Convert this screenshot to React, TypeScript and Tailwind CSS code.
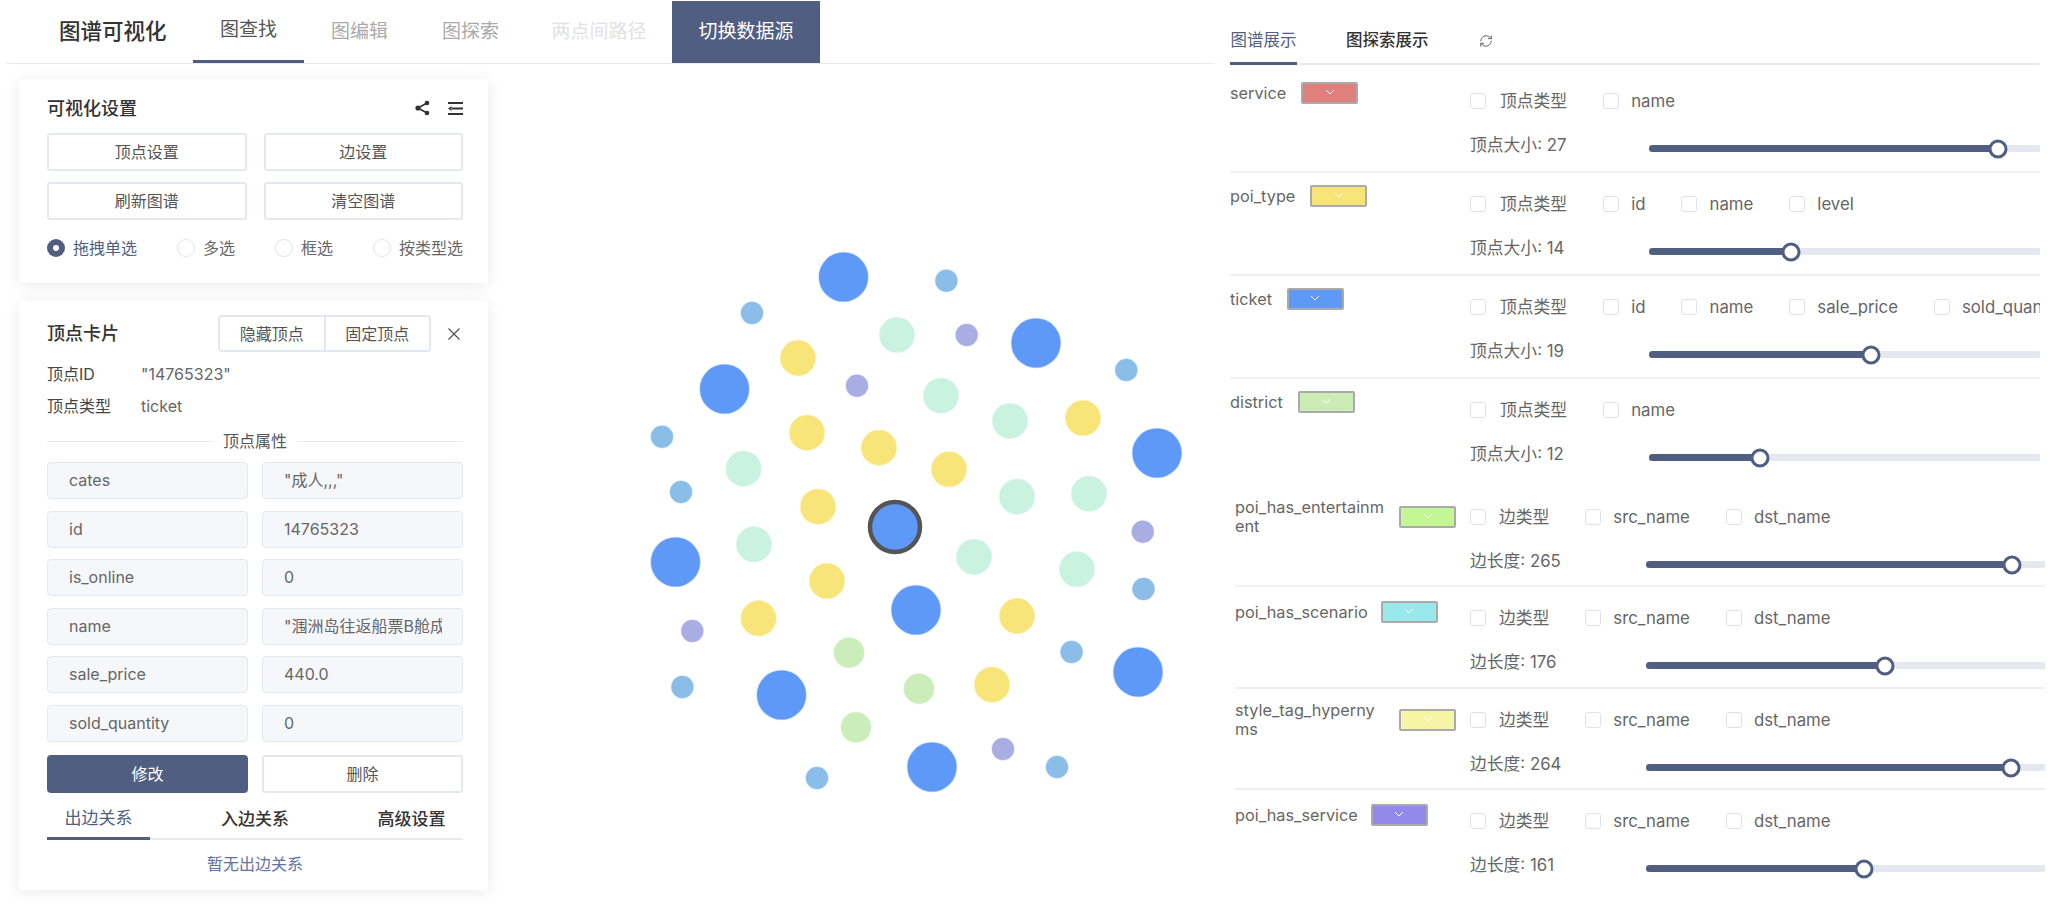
import { RefreshCw } from "lucide-react";

const nodeKinds = [
  {
    r: 25,
    fill: "#5f99f8",
    points: [[843.5, 277], [1036, 343], [724.5, 389], [1157, 453], [675.5, 562], [916, 610], [1138, 672], [781.5, 695], [932, 767]],
  },
  {
    r: 11.5,
    fill: "#8abde7",
    points: [[946.4, 280.7], [752, 313], [1126.3, 370], [662, 436.7], [681, 492], [1143.5, 589], [1071.6, 652], [682.4, 687], [817, 778], [1057, 767]],
  },
  {
    r: 11.5,
    fill: "#a8aee2",
    points: [[966.7, 335], [857, 385.7], [1142.8, 531.7], [692.3, 631], [1003, 749]],
  },
  {
    r: 18,
    fill: "#c9f2e1",
    points: [[897, 335], [941, 395.7], [1010, 421], [743.6, 468.7], [1017, 496.7], [1089, 493.7], [754, 544.3], [974, 557], [1077, 569.3]],
  },
  {
    r: 18,
    fill: "#f8e579",
    points: [[798, 358], [1083, 418], [807, 432.7], [879, 447.7], [949, 469.3], [818, 506.7], [827, 581], [758.5, 618.3], [1017, 616], [992, 684.7]],
  },
  {
    r: 15.5,
    fill: "#cbedba",
    points: [[849, 652.7], [919, 688.7], [856, 727.3]],
  },
];

const attrs = [
  ["cates", '"成人,,,"'],
  ["id", "14765323"],
  ["is_online", "0"],
  ["name", '"涠洲岛往返船票B舱成'],
  ["sale_price", "440.0"],
  ["sold_quantity", "0"],
];

const vertexRows = [
  { label: "service", color: "#e0807c", fields: ["name"], size: "顶点大小: 27", thumb: 349, row: "h-[103px] border-b-2" },
  { label: "poi_type", color: "#f8e579", fields: ["id", "name", "level"], size: "顶点大小: 14", thumb: 142, row: "h-[103px] border-b-2" },
  { label: "ticket", color: "#5f99f8", fields: ["id", "name", "sale_price", "sold_quantity"], size: "顶点大小: 19", thumb: 222, row: "h-[103px] border-b-2" },
  { label: "district", color: "#cbedb5", fields: ["name"], size: "顶点大小: 12", thumb: 111, row: "h-[103px]" },
];

const edgeRows = [
  { label: "poi_has_entertainment", color: "#c2f793", size: "边长度: 265", thumb: 365.5, row: "h-[101px] border-b-2", left: "pt-3" },
  { label: "poi_has_scenario", color: "#99e9eb", size: "边长度: 176", thumb: 238.5, row: "h-[102px] border-b-2", left: "pt-[14px]" },
  { label: "style_tag_hypernyms", color: "#f5f5a5", size: "边长度: 264", thumb: 365, row: "h-[101px] border-b-2", left: "pt-3" },
  { label: "poi_has_service", color: "#9389ea", size: "边长度: 161", thumb: 218, row: "h-[101px]", left: "pt-[14px]" },
];

function Swatch({ color }: { color: string }) {
  return (
    <div
      className="flex h-[22px] w-[57px] shrink-0 items-center justify-center rounded-[2px] border-2 border-[#aaa]"
      style={{ backgroundColor: color }}
    >
      <svg width="10" height="6" viewBox="0 0 10 6" fill="none" className="mb-[3px]">
        <path d="M1 1l4 4 4-4" stroke="white" strokeWidth="1" />
      </svg>
    </div>
  );
}

function Field({ text, gap }: { text: string; gap: string }) {
  return (
    <div className="flex shrink-0 items-center">
      <span className="size-4 shrink-0 rounded-[3px] border border-[#dfe2ea] bg-white" />
      <span className={`${gap} pt-px text-[#666]`}>{text}</span>
    </div>
  );
}

function Slider({ label, thumb, labelWidth }: { label: string; thumb: number; labelWidth: string }) {
  return (
    <div className="flex h-[33px] items-center">
      <span className={`${labelWidth} mb-[6px] shrink-0 text-[#666]`}>{label}</span>
      <div className="relative h-[7px] flex-1 bg-[#e6e8ef]">
        <div className="h-full rounded-l-full bg-[#505e82]" style={{ width: thumb }} />
        <div
          className="absolute top-1/2 size-[19px] -translate-x-1/2 -translate-y-1/2 rounded-full border-[3px] border-[#505e82] bg-white"
          style={{ left: thumb }}
        />
      </div>
    </div>
  );
}

function Radio({ text, checked }: { text: string; checked?: boolean }) {
  return (
    <div className="flex items-center gap-2">
      {checked ? (
        <span className="flex size-[18px] items-center justify-center rounded-full bg-[#505e82]">
          <span className="size-[6px] rounded-full bg-white" />
        </span>
      ) : (
        <span className="size-[18px] rounded-full border border-[#e3e5ec]" />
      )}
      <span className={checked ? "text-[#505e82]" : "text-[#666]"}>{text}</span>
    </div>
  );
}

function OutlineButton({ text }: { text: string }) {
  return (
    <div className="flex h-[38px] items-center justify-center rounded-[3px] border-2 border-[#e6e8ef] bg-white text-[#555]">
      {text}
    </div>
  );
}

function ReadOnlyBox({ text }: { text: string }) {
  return (
    <div className="h-[37px] rounded-[4px] border border-[#e6e8ef] bg-[#f6f7fb] pr-[20px] pl-[21px] leading-[35px] text-[#666]">
      <div className="overflow-hidden whitespace-nowrap">{text}</div>
    </div>
  );
}

export default function App() {
  return (
    <div className="flex h-[910px] w-[2072px] overflow-hidden bg-white font-['Inter','Noto_Sans_CJK_SC',sans-serif] text-base text-[#333]">
      {/* Left: header, panels and graph canvas */}
      <div className="ml-[6px] flex w-[1208px] shrink-0 flex-col">
        <header className="flex h-[64px] shrink-0 items-stretch border-b border-[#e8eaf0] pl-[53px]">
          <div className="mr-[28px] flex w-[106px] items-center whitespace-nowrap text-[21.5px] font-medium text-[#333]">图谱可视化</div>
          <div className="flex w-[111px] items-center justify-center border-b-[3px] border-[#505e82] pt-px text-[19px] text-[#555]">图查找</div>
          <div className="flex w-[111px] items-center justify-center pt-px text-[19px] text-[#aaa]">图编辑</div>
          <div className="flex w-[111px] items-center justify-center pt-px text-[19px] text-[#aaa]">图探索</div>
          <div className="flex w-[146px] items-center justify-center pt-px text-[19px] text-[#e2e2e2]">两点间路径</div>
          <div className="mt-px flex w-[148px] items-center justify-center bg-[#505e82] text-[19px] text-white">切换数据源</div>
        </header>

        <div className="flex min-h-0 flex-1">
          <div className="flex w-[484px] shrink-0 flex-col gap-[18px] pt-[15px] pl-[13px]">
            {/* Settings card */}
            <section className="h-[204px] w-[469px] rounded-[4px] bg-white pt-[16px] pr-[25px] pl-[28px] shadow-[0_2px_16px_rgba(0,0,0,0.09)]">
              <div className="flex h-[26px] items-center justify-between">
                <h2 className="text-[18px] font-medium text-[#333]">可视化设置</h2>
                <div className="flex items-center gap-[18px]">
                  <svg width="15" height="16" viewBox="0 0 15 16" fill="#333">
                    <circle cx="3" cy="8" r="2.6" />
                    <circle cx="12" cy="3" r="2.3" />
                    <circle cx="12" cy="13" r="2.3" />
                    <path d="M3 8l9-5M3 8l9 5" stroke="#333" strokeWidth="1.5" fill="none" />
                  </svg>
                  <svg width="15" height="13" viewBox="0 0 15 13" fill="#333">
                    <rect x="0" y="0" width="15" height="2" />
                    <rect x="4" y="5.5" width="11" height="2" />
                    <path d="M0 6.5l3.5-2.5v5z" />
                    <rect x="0" y="11" width="15" height="2" />
                  </svg>
                </div>
              </div>
              <div className="mt-[12px] grid grid-cols-2 gap-x-[17px] gap-y-[11px]">
                <OutlineButton text="顶点设置" />
                <OutlineButton text="边设置" />
                <OutlineButton text="刷新图谱" />
                <OutlineButton text="清空图谱" />
              </div>
              <div className="mt-[16px] flex items-center justify-between">
                <Radio text="拖拽单选" checked />
                <Radio text="多选" />
                <Radio text="框选" />
                <Radio text="按类型选" />
              </div>
            </section>

            {/* Vertex card */}
            <section className="h-[589px] w-[469px] rounded-[4px] bg-white pt-[14px] pr-[25px] pl-[28px] shadow-[0_2px_16px_rgba(0,0,0,0.09)]">
              <div className="flex h-[37px] items-center">
                <h2 className="text-[18px] font-medium text-[#333]">顶点卡片</h2>
                <div className="ml-[99px] flex h-[37px] w-[213px] rounded-[4px] border-2 border-[#e6e8ef] text-[#555]">
                  <div className="flex flex-1 items-center justify-center border-r-2 border-[#e6e8ef]">隐藏顶点</div>
                  <div className="flex flex-1 items-center justify-center">固定顶点</div>
                </div>
                <svg className="ml-[17px]" width="12" height="12" viewBox="0 0 12 12" fill="none">
                  <path d="M0.5 0.5l11 11M11.5 0.5l-11 11" stroke="#555" strokeWidth="1.3" />
                </svg>
              </div>
              <div className="mt-[9px] flex h-[26px] items-center">
                <span className="w-[94px] text-[#444]">顶点ID</span>
                <span className="text-[#666]">"14765323"</span>
              </div>
              <div className="mt-[6px] flex h-[26px] items-center">
                <span className="w-[94px] text-[#444]">顶点类型</span>
                <span className="text-[#666]">ticket</span>
              </div>
              <div className="mt-[9px] flex h-[26px] items-center gap-[10px] text-[#555]">
                <span className="h-px flex-1 bg-[#e8eaf0]" />
                顶点属性
                <span className="h-px flex-1 bg-[#e8eaf0]" />
              </div>
              <div className="mt-[8px] grid grid-cols-2 gap-x-[14px] gap-y-[11.5px]">
                {attrs.map(([name, value]) => (
                  <div key={name} className="contents">
                    <ReadOnlyBox text={name} />
                    <ReadOnlyBox text={value} />
                  </div>
                ))}
              </div>
              <div className="mt-[13px] grid grid-cols-2 gap-x-[14px]">
                <div className="flex h-[38px] items-center justify-center rounded-[4px] bg-[#505e82] text-white">修改</div>
                <OutlineButton text="删除" />
              </div>
              <div className="mt-[9px] flex h-[38px] items-center justify-between border-b-2 border-[#e8eaf0] text-[17px]">
                <div className="-mb-[2px] flex h-[38px] w-[103px] items-center justify-center border-b-[3px] border-[#505e82] text-[#505e82]">出边关系</div>
                <div className="flex w-[103px] justify-center font-medium text-[#333]">入边关系</div>
                <div className="flex w-[103px] justify-center font-medium text-[#333]">高级设置</div>
              </div>
              <div className="mt-[12px] text-center text-[#6373a0]">暂无出边关系</div>
            </section>
          </div>

          {/* Graph canvas */}
          <svg className="shrink-0" width="724" height="846" viewBox="490 64 724 846">
            {nodeKinds.map((kind) =>
              kind.points.map(([cx, cy]) => (
                <circle
                  key={`${cx}-${cy}`}
                  cx={cx}
                  cy={cy}
                  r={kind.r - 0.5}
                  fill={kind.fill}
                  stroke={kind.fill}
                  strokeOpacity="0.35"
                  strokeWidth="1.5"
                />
              )),
            )}
            <circle cx="895" cy="527" r="25" fill="#5f99f8" stroke="#555" strokeWidth="4.5" />
          </svg>
        </div>
      </div>

      {/* Right: display settings */}
      <div className="ml-[16px] flex w-[815px] shrink-0 flex-col text-[16.8px]">
        <div className="flex h-[65px] w-[810px] shrink-0 items-stretch border-b-2 border-[#e8eaf0] text-[16.5px]">
          <div className="-mb-[2px] flex w-[67px] items-center justify-center border-b-[3px] border-[#505e82] pt-[18px] text-[#505e82]">图谱展示</div>
          <div className="ml-[49px] flex items-center pt-[18px] font-medium text-[#333]">图探索展示</div>
          <div className="ml-[50px] flex items-center pt-[18px] text-[#555]">
            <RefreshCw size={14} strokeWidth={1.5} />
          </div>
        </div>

        <div className="w-[810px] pt-[5px]">
          {vertexRows.map((r) => (
            <div key={r.label} className={`${r.row} flex items-start gap-0 overflow-hidden border-[#eef0f4]`}>
              <div className="flex w-[240px] shrink-0 items-center gap-[15px] pt-3 text-[#666]">
                <span className="text-[16.3px] leading-[22px]">{r.label}</span>
                <Swatch color={r.color} />
              </div>
              <div className="min-w-0 flex-1">
                <div className="flex h-[62px] items-center gap-[36px] whitespace-nowrap">
                  <Field text="顶点类型" gap="ml-[14px]" />
                  {r.fields.map((f) => (
                    <Field key={f} text={f} gap="ml-3" />
                  ))}
                </div>
                <Slider label={r.size} thumb={r.thumb} labelWidth="w-[179px]" />
              </div>
            </div>
          ))}
        </div>

        <div className="mt-1 ml-[5px] w-[810px]">
          {edgeRows.map((r) => (
            <div key={r.label} className={`${r.row} flex items-start overflow-hidden border-[#eef0f4]`}>
              <div className={`${r.left} flex w-[235px] shrink-0 items-center gap-[13px] text-[#666]`}>
                <span className="max-w-[151px] text-[16.3px] leading-[19px] break-all">{r.label}</span>
                <Swatch color={r.color} />
              </div>
              <div className="min-w-0 flex-1">
                <div className="flex h-[62px] items-center gap-[36px] whitespace-nowrap">
                  <Field text="边类型" gap="ml-[13px]" />
                  <Field text="src_name" gap="ml-3" />
                  <Field text="dst_name" gap="ml-3" />
                </div>
                <Slider label={r.size} thumb={r.thumb} labelWidth="w-[176px]" />
              </div>
            </div>
          ))}
        </div>
      </div>
    </div>
  );
}
